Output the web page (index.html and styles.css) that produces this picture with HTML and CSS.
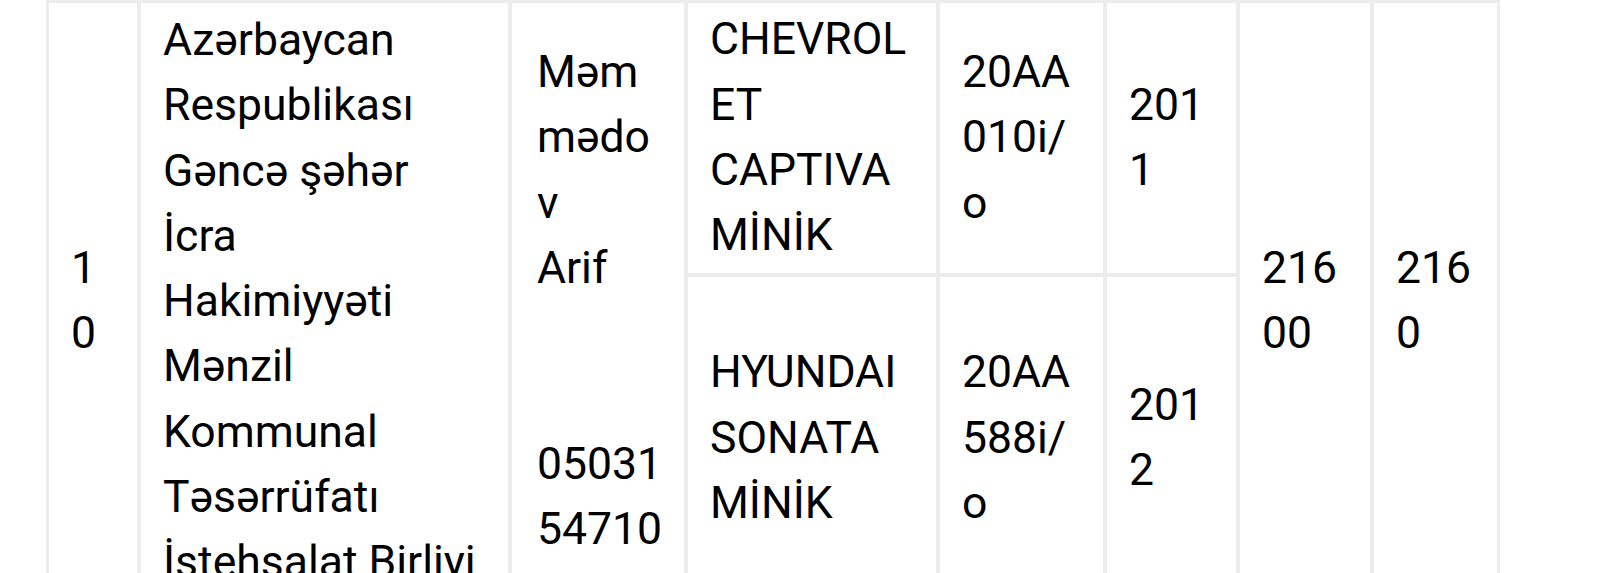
FILE: index.html
```html
<!DOCTYPE html>
<html lang="az">
<head>
<meta charset="utf-8">
<title>Cədvəl</title>
<link rel="stylesheet" href="styles.css">
</head>
<body>
<div class="page">
  <div class="grid">
    <div class="cell span2 c1">10</div>
    <div class="cell span2 c2">Azərbaycan<br>Respublikası<br>Gəncə şəhər<br>İcra<br>Hakimiyyəti<br>Mənzil<br>Kommunal<br>Təsərrüfatı<br>İstehsalat Birliyi</div>
    <div class="cell span2 c3">Məmmədov<br>Arif<br><br><br>0503154710</div>
    <div class="cell c4">CHEVROLET CAPTIVA MİNİK</div>
    <div class="cell c5">20AA010i/o</div>
    <div class="cell c6">2011</div>
    <div class="cell span2 c7">21600</div>
    <div class="cell span2 c8">2160</div>
    <div class="cell c4 r2">HYUNDAI SONATA MİNİK</div>
    <div class="cell c5 r2">20AA588i/o</div>
    <div class="cell c6 r2">2012</div>
  </div>
</div>
</body>
</html>
```

FILE: styles.css
```css
html, body {
  margin: 0;
  padding: 0;
  background: #ffffff;
  overflow: hidden;
}

.page {
  padding-left: 46px;
}

.grid {
  display: grid;
  grid-template-columns: 88px 367px 172px 248px 163px 129px 130px 123px;
  grid-template-rows: 270px auto;
  gap: 4px;
  padding: 3px;
  width: max-content;
  background: #ececec;
  font-family: Roboto, "Noto Sans", sans-serif;
  font-size: 44.5px;
  line-height: 65.3px;
  color: #000000;
}

.cell {
  background: #ffffff;
  padding: 4px 22px;
  display: flex;
  flex-direction: column;
  justify-content: center;
  overflow-wrap: anywhere;
  word-break: break-word;
}

.span2 {
  grid-row: 1 / span 2;
}

.c1 { grid-column: 1; }
.c2 { grid-column: 2; justify-content: flex-start; padding-top: 5px; }
.c3 { grid-column: 3; padding-left: 25px; padding-right: 19px; }
.c4 { grid-column: 4; }
.c5 { grid-column: 5; }
.c6 { grid-column: 6; }
.c7 { grid-column: 7; }
.c8 { grid-column: 8; }

.r2 {
  grid-row: 2;
}
```
